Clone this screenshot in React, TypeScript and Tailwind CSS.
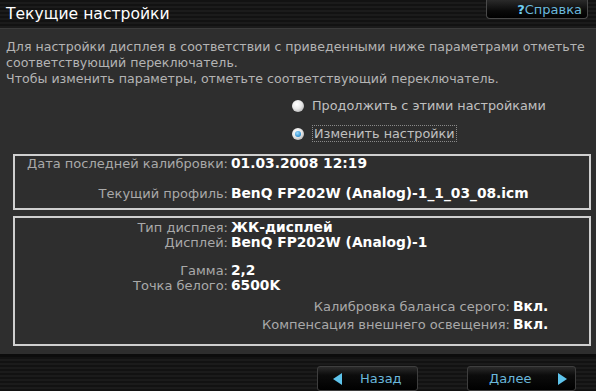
import React from "react";

const Radio = ({ checked }: { checked?: boolean }) => (
  <span className="w-[12px] h-[12px] rounded-full bg-[radial-gradient(circle_at_40%_35%,#ffffff_0%,#e8e8e8_45%,#9a9a9a_100%)] flex items-center justify-center shrink-0">
    {checked && <span className="w-[6px] h-[6px] rounded-full bg-[radial-gradient(circle_at_40%_35%,#9fdcff_0%,#2d8fd0_70%,#1a5f99_100%)]" />}
  </span>
);

const Row = ({ label, value, labelW = "w-[213px]" }: { label: string; value: string; labelW?: string }) => (
  <div className="flex items-baseline leading-[15px]">
    <span className={`${labelW} shrink-0 text-right text-[#a9a9a9] text-[13px]`}>{label}</span>
    <span className="ml-[3px] text-white font-bold text-[13.8px] whitespace-nowrap">{value}</span>
  </div>
);

export default function App() {
  const stripes =
    "bg-[repeating-linear-gradient(180deg,#121212_0px,#121212_2px,#1b1b1b_2px,#1b1b1b_4px)]";
  return (
    <div
      className="w-[596px] h-[391px] flex flex-col bg-[#2e2e2e] overflow-hidden"
      style={{ fontFamily: '"DejaVu Sans", "Noto Sans", sans-serif' }}
    >
      {/* Header */}
      <div className={`h-[29px] shrink-0 flex items-start justify-between ${stripes} border-b border-[#3c3c3c]`}>
        <div className="pl-[6px] pt-[3px] text-white text-[15.6px] leading-[22px]">Текущие настройки</div>
        <div className="mr-[8px] w-[102px] h-[19px] rounded-b-[4px] bg-[linear-gradient(180deg,#2a2a2a_0%,#0a0a0a_60%,#000000_100%)] border border-t-0 border-[#4a4a4a] flex items-center justify-end pr-[5px]">
          <span className="text-[#6fd0f5] font-bold text-[13px] leading-none">?</span>
          <span className="text-[#6ab8dc] text-[13px] leading-none">Справка</span>
        </div>
      </div>

      {/* Content */}
      <div className="flex-1 flex flex-col px-[6px] pt-[10px]">
        <div className="text-[#b4b4b4] text-[12.6px] leading-[16px]">
          <div>Для настройки дисплея в соответствии с приведенными ниже параметрами отметьте</div>
          <div>соответствующий переключатель.</div>
          <div>Чтобы изменить параметры, отметьте соответствующий переключатель.</div>
        </div>

        <div className="flex flex-col gap-[10px] pl-[286px] mt-[9px] text-[#c0c0c0] text-[12.8px]">
          <div className="flex items-center gap-[8px]">
            <Radio />
            <span>Продолжить с этими настройками</span>
          </div>
          <div className="flex items-center gap-[8px]">
            <Radio checked />
            <span className="border border-dotted border-[#8a8a8a] px-[1px] leading-[15px]">Изменить настройки</span>
          </div>
        </div>

        <div className="mt-[12px] ml-[7px] mr-[-1px] h-[56px] border-2 border-[#cfcfcf] flex flex-col gap-[15px]">
          <Row label="Дата последней калибровки:" value="01.03.2008 12:19" />
          <Row label="Текущий профиль:" value="BenQ FP202W (Analog)-1_1_03_08.icm" />
        </div>

        <div className="mt-[6px] ml-[7px] mr-[-1px] h-[130px] border-2 border-[#cfcfcf] flex flex-col pt-[2px]">
          <Row label="Тип дисплея:" value="ЖК-дисплей" />
          <Row label="Дисплей:" value="BenQ FP202W (Analog)-1" />
          <div className="h-[13px]" />
          <Row label="Гамма:" value="2,2" />
          <Row label="Точка белого:" value="6500K" />
          <div className="h-[6px]" />
          <Row label="Калибровка баланса серого:" value="Вкл." labelW="w-[495px]" />
          <div className="h-[3px]" />
          <Row label="Компенсация внешнего освещения:" value="Вкл." labelW="w-[495px]" />
        </div>
      </div>

      {/* Footer */}
      <div className={`h-[37px] shrink-0 border-t-[3px] border-[#0c0c0c] ${stripes} flex items-start pt-[9px] pl-[317px]`}>
        <div className="w-[101px] h-[25px] rounded-[3px] border border-[#3e3e3e] bg-[linear-gradient(180deg,#2b2b2b_0%,#0c0c0c_35%,#000000_100%)] flex items-center">
          <span className="ml-[15px] w-0 h-0 border-y-[6px] border-y-transparent border-r-[9px] border-r-[#5ec4ec]" />
          <span className="ml-[18px] text-[#6ab8dc] text-[13px]">Назад</span>
        </div>
        <div className="ml-[49px] w-[109px] h-[25px] rounded-[3px] border border-[#3e3e3e] bg-[linear-gradient(180deg,#2b2b2b_0%,#0c0c0c_35%,#000000_100%)] flex items-center">
          <span className="ml-[21px] text-[#6ab8dc] text-[13px]">Далее</span>
          <span className="ml-[27px] w-0 h-0 border-y-[6px] border-y-transparent border-l-[9px] border-l-[#5ec4ec]" />
        </div>
      </div>
    </div>
  );
}
